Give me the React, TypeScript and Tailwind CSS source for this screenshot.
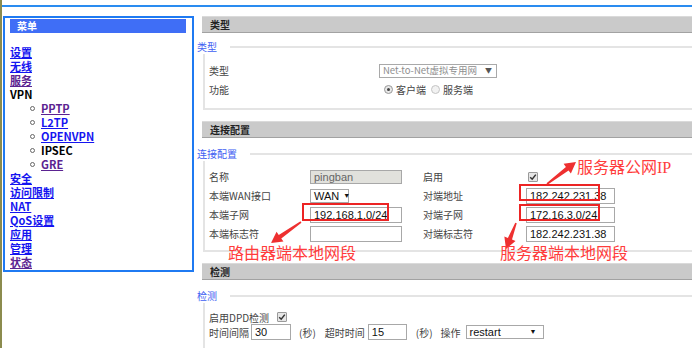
import React from 'react';

type MenuItem = { label: string; tone: 'link' | 'visited' | 'plain'; sub?: boolean };

const menu: MenuItem[] = [
  { label: '设置', tone: 'link' },
  { label: '无线', tone: 'link' },
  { label: '服务', tone: 'visited' },
  { label: 'VPN', tone: 'plain' },
  { label: 'PPTP', tone: 'visited', sub: true },
  { label: 'L2TP', tone: 'link', sub: true },
  { label: 'OPENVPN', tone: 'link', sub: true },
  { label: 'IPSEC', tone: 'plain', sub: true },
  { label: 'GRE', tone: 'visited', sub: true },
  { label: '安全', tone: 'link' },
  { label: '访问限制', tone: 'link' },
  { label: 'NAT', tone: 'link' },
  { label: 'QoS设置', tone: 'link' },
  { label: '应用', tone: 'link' },
  { label: '管理', tone: 'link' },
  { label: '状态', tone: 'visited' },
];

const toneClass = {
  link: 'text-[#1414f0] underline',
  visited: 'text-[#5b2391] underline',
  plain: 'text-black',
};

// tapered red arrow, head at (x2, y2)
function arrowPoints(x1: number, y1: number, x2: number, y2: number) {
  const len = Math.hypot(x2 - x1, y2 - y1);
  const dx = (x2 - x1) / len;
  const dy = (y2 - y1) / len;
  const nx = -dy;
  const ny = dx;
  const h = 11;
  const w = 6;
  const bx = x2 - dx * h;
  const by = y2 - dy * h;
  const pts = [
    [x1 + nx * 0.8, y1 + ny * 0.8],
    [bx + nx * 2.2, by + ny * 2.2],
    [bx + nx * w, by + ny * w],
    [x2, y2],
    [bx - nx * w, by - ny * w],
    [bx - nx * 2.2, by - ny * 2.2],
    [x1 - nx * 0.8, y1 - ny * 0.8],
  ];
  return pts.map(p => p.join(',')).join(' ');
}

function SectionHeader({ title }: { title: string }) {
  return (
    <div className="ml-[5px] h-[17px] bg-[#cacaca] border-t border-[#dadada] border-b border-b-[#a2a2a2] pl-[8px] text-[10px] font-bold leading-[15px] text-[#222]">
      {title}
    </div>
  );
}

function Legend({ title }: { title: string }) {
  return (
    <div className="flex items-center h-[14px]">
      <span className="text-[10px] leading-[14px] text-[#4060f2]">{title}</span>
      <div className="flex-1 h-[2px] bg-[#e4e4e4] ml-[13px]" />
    </div>
  );
}

function Checkbox() {
  return (
    <div className="w-[10px] h-[10px] border border-[#9a9a9a] bg-[#e6e6e6] rounded-[1px] flex items-center justify-center">
      <svg width="8" height="8" viewBox="0 0 8 8">
        <path d="M1.2 4.2 L3.2 6.2 L6.8 1.6" fill="none" stroke="#333" strokeWidth="1.5" />
      </svg>
    </div>
  );
}

function Input({ value, w }: { value?: string; w: string }) {
  return (
    <div
      className={`${w} h-[16px] border border-[#a8a8a8] bg-white px-[3px] flex items-center text-[11px] leading-[14px] text-[#111] font-['Liberation_Sans',sans-serif]`}
    >
      {value}
    </div>
  );
}

export default function App() {
  return (
    <div className="relative w-[692px] h-[348px] overflow-hidden bg-white flex font-['Noto_Sans_CJK_SC',sans-serif]">
      <div className="w-[2px] shrink-0 bg-[#8b8b4e]" />

      <div className="flex-1">
        <div className="h-[5px]" />
        <div className="h-[2px] bg-[#2a8cf0]" />

        <div className="flex mt-[9px]">
          {/* menu */}
          <div className="ml-[1px] w-[191px] shrink-0 self-start border-2 border-[#1f7af2] pb-[1px]">
            <div className="mt-[1px] ml-[5px] w-[176px] h-[14px] bg-[#3f6ef6] pl-[7px] text-[10px] font-bold leading-[14px] text-white">
              菜单
            </div>
            <ul className="mt-[12px] pl-[5px]">
              {menu.map(item => (
                <li
                  key={item.label}
                  className={`flex items-center h-[14px] text-[11px] font-bold leading-[13px] ${item.sub ? 'pl-[20px]' : ''}`}
                >
                  {item.sub && <span className="w-[5px] h-[5px] rounded-full border border-[#666] mr-[6px]" />}
                  <span className={`inline-block h-[13px] overflow-visible ${toneClass[item.tone]}`}>{item.label}</span>
                </li>
              ))}
            </ul>
          </div>

          {/* content */}
          <div className="ml-[3px] w-[495px] shrink-0 text-[10px] leading-[13px] text-[#444]">
            <SectionHeader title="类型" />
            <div className="mt-[7px]">
              <Legend title="类型" />
              <div className="ml-[6px] border-l-2 border-b-2 border-[#e4e4e4] pt-[7px] pb-[9px] pl-[4px]">
                <div className="flex items-center h-[19px]">
                  <span className="w-[170px]">类型</span>
                  <div className="w-[118px] h-[14px] border border-[#a9a9a9] flex items-center justify-between pl-[3px] pr-[4px] text-[9.5px] text-[#8e8e8e]">
                    <span>Net-to-Net虚拟专用网</span>
                    <span className="text-[7px] text-[#555]">▼</span>
                  </div>
                </div>
                <div className="flex items-center h-[19px]">
                  <span className="w-[175px]">功能</span>
                  <span className="w-[9px] h-[9px] rounded-full border border-[#999] bg-[#e8e8e8] flex items-center justify-center">
                    <span className="w-[3px] h-[3px] rounded-full bg-[#444]" />
                  </span>
                  <span className="ml-[3px]">客户端</span>
                  <span className="ml-[5px] w-[9px] h-[9px] rounded-full border border-[#c4c4c4] bg-[#f2f2f2]" />
                  <span className="ml-[3px]">服务端</span>
                </div>
              </div>
            </div>

            <div className="mt-[11px]">
              <SectionHeader title="连接配置" />
            </div>
            <div className="mt-[9px]">
              <Legend title="连接配置" />
              <div className="ml-[6px] border-l-2 border-b-2 border-[#e4e4e4] pt-[6px] pb-[7px] pl-[4px]">
                <div className="grid grid-cols-[101px_113px_103px_auto] auto-rows-[19px] items-center">
                  <span>名称</span>
                  <div className="h-[14px] w-[92px] border border-[#a8a8a8] bg-[#e1e1dc] px-[3px] flex items-center text-[11px] leading-[12px] text-[#666] font-['Liberation_Sans',sans-serif]">
                    pingban
                  </div>
                  <span>启用</span>
                  <div className="pl-[2px]">
                    <Checkbox />
                  </div>

                  <span>本端WAN接口</span>
                  <div className="w-[39px] h-[14px] border border-[#a8a8a8] flex items-center gap-[4px] px-[3px] text-[11px] leading-[12px] text-[#111] font-['Liberation_Sans',sans-serif]">
                    <span>WAN</span>
                    <span className="text-[7px]">▼</span>
                  </div>
                  <span>对端地址</span>
                  <Input value="182.242.231.38" w="w-[89px]" />

                  <span>本端子网</span>
                  <Input value="192.168.1.0/24" w="w-[92px]" />
                  <span>对端子网</span>
                  <Input value="172.16.3.0/24" w="w-[89px]" />

                  <span>本端标志符</span>
                  <Input w="w-[92px]" />
                  <span>对端标志符</span>
                  <Input value="182.242.231.38" w="w-[89px]" />
                </div>
              </div>
            </div>

            <div className="mt-[11px]">
              <SectionHeader title="检测" />
            </div>
            <div className="mt-[9px]">
              <Legend title="检测" />
              <div className="ml-[6px] border-l-2 border-[#e4e4e4] pt-[7px] pb-[20px] pl-[4px]">
                <div className="flex items-center h-[14px]">
                  <span>启用DPD检测</span>
                  <div className="ml-[8px]">
                    <Checkbox />
                  </div>
                </div>
                <div className="flex items-center h-[16px]">
                  <span>时间间隔</span>
                  <div className="ml-[2px]">
                    <Input value="30" w="w-[40px]" />
                  </div>
                  <span className="ml-[8px]">(秒)</span>
                  <span className="ml-[9px]">超时时间</span>
                  <div className="ml-[3px]">
                    <Input value="15" w="w-[39px]" />
                  </div>
                  <span className="ml-[9px]">(秒)</span>
                  <span className="ml-[8px]">操作</span>
                  <div className="ml-[5px] w-[78px] h-[14px] border border-[#a8a8a8] flex items-center justify-between pl-[3px] pr-[6px] text-[11px] leading-[12px] text-[#111] font-['Liberation_Sans',sans-serif]">
                    <span>restart</span>
                    <span className="text-[7px]">▼</span>
                  </div>
                </div>
              </div>
            </div>
          </div>
        </div>
      </div>

      {/* red annotations drawn over the screenshot */}
      <div className="absolute left-[302px] top-[203px] w-[87px] h-[18px] border-2 border-[#ec2424]" />
      <div className="absolute left-[519px] top-[184px] w-[81px] h-[17px] border-2 border-[#ec2424]" />
      <div className="absolute left-[519px] top-[204px] w-[81px] h-[17px] border-2 border-[#ec2424]" />

      <svg className="absolute left-0 top-0" width="692" height="348">
        <polygon points={arrowPoints(301, 222, 271, 243)} fill="#ee3030" />
        <polygon points={arrowPoints(547, 184, 576, 162)} fill="#ee3030" />
        <polygon points={arrowPoints(516, 223, 506, 249)} fill="#ee3030" />
      </svg>

      <span className="absolute left-[228px] top-[243px] text-[16px] leading-[19px] text-[#ff3c3c]">路由器端本地网段</span>
      <span className="absolute left-[500px] top-[243px] text-[16px] leading-[19px] text-[#ff3c3c]">服务器端本地网段</span>
      <span className="absolute left-[577px] top-[157px] text-[16px] leading-[19px] text-[#ff3c3c]">
        服务器公网<span className="font-['Liberation_Serif',serif]">IP</span>
      </span>
    </div>
  );
}
